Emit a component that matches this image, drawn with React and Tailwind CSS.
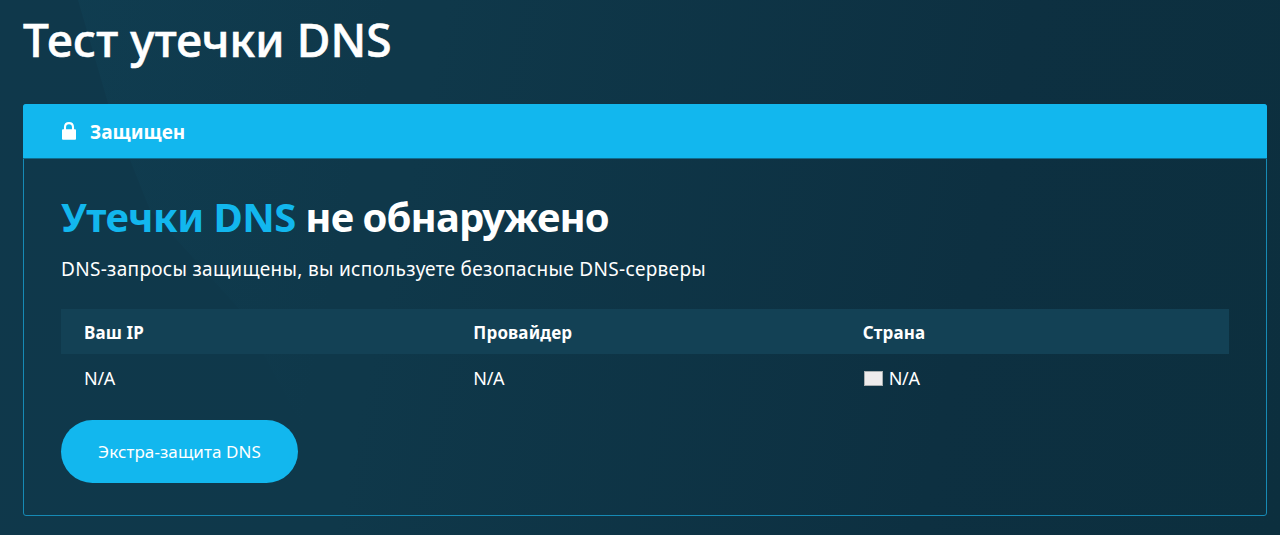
const columns = ['Ваш IP', 'Провайдер', 'Страна']

function LockIcon() {
  return (
    <svg width="14" height="18" viewBox="0 0 14 18" fill="none">
      <path d="M3 9V5.2C3 2.6 4.7 1.1 7 1.1s4 1.5 4 4.1V9" stroke="#fff" strokeWidth="2.1" />
      <rect y="7.2" width="14" height="10.5" rx="1" fill="#fff" />
    </svg>
  )
}

// faint light ray behind the page
function Rays() {
  return (
    <svg className="absolute inset-0" width="1280" height="535" viewBox="0 0 1280 535">
      <defs>
        <linearGradient id="ray" gradientUnits="userSpaceOnUse" x1="80" y1="0" x2="380" y2="60">
          <stop offset="0" stopColor="#145870" stopOpacity="0.14" />
          <stop offset="1" stopColor="#145870" stopOpacity="0" />
        </linearGradient>
      </defs>
      <path d="M78 0H560L360 535L240 310L150 210L110 110Z" fill="url(#ray)" />
    </svg>
  )
}

function ResultTable() {
  return (
    <div className="mt-[26px] leading-6 text-white">
      <div className="grid h-[45px] grid-cols-3 items-center bg-[#134155] pt-0.5 text-[17px] font-bold">
        {columns.map((name) => (
          <div key={name} className="pl-[23px]">
            <span className="tracking-[0.15px]">{name}</span>
          </div>
        ))}
      </div>
      <div className="grid h-[48px] grid-cols-3 items-center text-[18px] tracking-[-0.3px]">
        <div className="pl-[23px]">N/A</div>
        <div className="pl-[23px]">N/A</div>
        <div className="flex items-center pl-6">
          <span className="mr-[6px] h-[15px] w-[19px] border border-[#a9aeb0] bg-[#eeebec]" />
          N/A
        </div>
      </div>
    </div>
  )
}

export default function App() {
  return (
    <div className="relative h-[535px] w-[1280px] overflow-hidden bg-linear-[102deg,#0f384b_0%,#0f384a_32%,#0d3041_74%,#0c2f3e_100%] font-['Noto_Sans','Open_Sans',sans-serif]">
      <Rays />
      <main className="relative pl-[23px] pr-[13px]">
        <h1 className="flex h-[104px] items-start pt-[7px] text-[46px] leading-[64px] font-medium text-white">
          <span className="tracking-[0.1px] [-webkit-text-stroke:0.6px_white]">Тест утечки DNS</span>
        </h1>
        <section className="h-[412px] rounded-[3px] border border-[#168ab5]">
          <div className="-mx-px -mt-px flex h-[55px] items-center rounded-t-[3px] border-b border-[#0f6c8e] bg-[#12b7ee] pl-[39px] text-[19px] font-bold text-white">
            <LockIcon />
            <span className="ml-[14px] pt-0.5">Защищен</span>
          </div>
          <div className="px-[37px] pt-[33px]">
            <h2 className="text-[40px] leading-[50px] font-bold whitespace-nowrap text-white">
              <span className="tracking-[-0.5px] text-[#12b7ee]">Утечки DNS</span>{' '}
              <span className="-ml-px tracking-[-0.9px]">не обнаружено</span>
            </h2>
            <p className="mt-[13px] text-[19px] leading-7 whitespace-nowrap text-white">
              <span className="tracking-[0.31px]">
                DNS-запросы защищены, вы используете безопасные DNS-серверы
              </span>
            </p>
            <ResultTable />
            <button className="mt-[18px] flex h-[63px] w-[237px] items-center justify-center rounded-full bg-[#12b7ee] text-[17px] text-white">
              <span className="tracking-[0.1px]">Экстра-защита DNS</span>
            </button>
          </div>
        </section>
      </main>
    </div>
  )
}
